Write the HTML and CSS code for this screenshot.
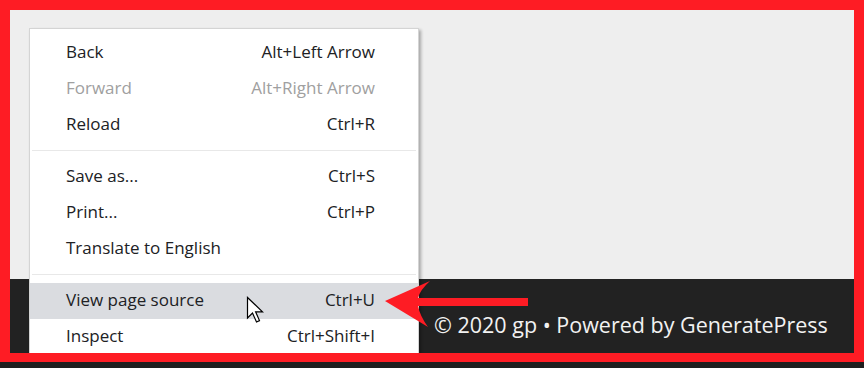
FILE: index.html
```html
<!DOCTYPE html>
<html lang="en">

<head>
    <meta charset="UTF-8">
    <meta name="viewport" content="width=device-width, initial-scale=1.0">
    <title>View page source</title>
    <link rel="stylesheet" href="styles.css">
</head>

<body>
    <div class="screen">
        <div class="page">
            <div class="content"></div>
            <footer class="site-footer">
                <p>&copy; 2020 gp &bull; Powered by GeneratePress</p>
            </footer>
        </div>

        <ul class="context-menu">
            <li><span>Back</span><span>Alt+Left Arrow</span></li>
            <li class="disabled"><span>Forward</span><span>Alt+Right Arrow</span></li>
            <li><span>Reload</span><span>Ctrl+R</span></li>
            <li class="separator"></li>
            <li><span>Save as...</span><span>Ctrl+S</span></li>
            <li><span>Print...</span><span>Ctrl+P</span></li>
            <li><span>Translate to English</span><span></span></li>
            <li class="separator"></li>
            <li class="active"><span>View page source</span><span>Ctrl+U</span></li>
            <li><span>Inspect</span><span>Ctrl+Shift+I</span></li>
        </ul>

        <!-- pointer -->
        <svg class="cursor" width="20" height="28" viewBox="0 0 20 28">
            <path d="M1.5 1.5 L1.5 22 L6.5 17 L10.5 26 L13.5 24.6 L9.6 15.8 L16.5 15.8 Z"
                fill="#fff" stroke="#000" stroke-width="1.2" stroke-linejoin="miter" />
        </svg>

        <!-- red arrow annotation -->
        <svg class="arrow" width="160" height="64" viewBox="0 0 160 64">
            <path d="M15 35 L60 15 Q50 24 48 32 L158 32 L158 40 L48 40 Q50 50 58 61 Z" fill="#fe1c24" />
        </svg>
    </div>
    <div class="taskbar"></div>
</body>

</html>
```

FILE: styles.css
```css
* {
    margin: 0;
    padding: 0;
    box-sizing: border-box;
}

body {
    font-family: 'Open Sans', 'Noto Sans', sans-serif;
    background: #1e1e1e;
    width: 864px;
}

.screen {
    position: relative;
    height: 362px;
    border: 10px solid #fe1c24;
    border-bottom-width: 9px;
    overflow: hidden;
}

.page {
    display: flex;
    flex-direction: column;
    height: 100%;
}

.content {
    height: 269px;
    background: #eeeeee;
}

.site-footer {
    flex: 1;
    background: #222222;
    color: #f2f2f2;
    padding: 24px 0 0 424px;
    font-size: 21.5px;
    line-height: 44px;
}

/* Context menu */
.context-menu {
    position: absolute;
    left: 19px;
    top: 18px;
    width: 390px;
    background: white;
    border: 1px solid #d4d4d4;
    box-shadow: 2px 2px 3px rgba(0, 0, 0, 0.3);
    list-style: none;
    padding-top: 6px;
    font-size: 17px;
    color: #202124;
}

.context-menu li {
    display: flex;
    justify-content: space-between;
    align-items: center;
    height: 36px;
    padding: 0 43px 3px 36px;
}

.context-menu li.disabled {
    color: #a0a0a0;
}

.context-menu li.active {
    background: #dadce0;
}

.context-menu li.separator {
    height: 1px;
    margin: 7px 2px 8px;
    padding: 0;
    background: #e8e8e8;
}

.cursor {
    position: absolute;
    left: 236px;
    top: 286px;
}

.arrow {
    position: absolute;
    left: 360px;
    top: 256px;
}

.taskbar {
    height: 6px;
    background: #1e1e1e;
}
```
